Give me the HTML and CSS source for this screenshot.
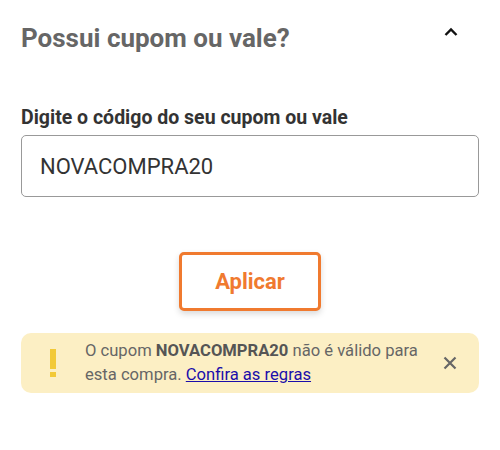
FILE: index.html
```html
<!DOCTYPE html>
<html lang="pt-BR">
<head>
<meta charset="utf-8">
<link rel="stylesheet" href="styles.css">
</head>
<body>
<div class="panel">
  <div class="header">
    <h2 class="title">Possui cupom ou vale?</h2>
    <svg class="chevron" width="14" height="10" viewBox="0 0 14 10"><path d="M1.5 8 L7 2.5 L12.5 8" fill="none" stroke="#111" stroke-width="2.4"/></svg>
  </div>
  <label class="label" for="code">Digite o código do seu cupom ou vale</label>
  <div class="input">NOVACOMPRA20</div>
  <div class="actions">
    <button class="btn">Aplicar</button>
  </div>
  <div class="alert">
    <div class="alert-icon"><span class="bar"></span><span class="dot"></span></div>
    <p class="alert-text">O cupom <b>NOVACOMPRA20</b> não é válido para esta compra. <a href="#">Confira as regras</a></p>
    <svg class="close" width="14" height="14" viewBox="0 0 14 14"><path d="M1.5 1.5 L12.5 12.5 M12.5 1.5 L1.5 12.5" stroke="#666" stroke-width="2.2"/></svg>
  </div>
</div>
</body>
</html>
```
FILE: styles.css
```css
html, body { margin: 0; padding: 0; background: #fff; }
body { font-family: Roboto, "Noto Sans", sans-serif; }
.panel { padding: 23px 21px 0 21px; display: flex; flex-direction: column; }
.header { display: flex; justify-content: space-between; align-items: flex-start; }
.title { margin: 0; font-size: 26px; line-height: 30px; font-weight: 700; color: #666; }
.chevron { margin: 4px 21px 0 0; }
.label { margin-top: 54px; font-size: 19.5px; line-height: 22px; font-weight: 700; color: #333; }
.input { margin-top: 6px; height: 60px; border: 1px solid #999; border-radius: 5px; padding: 0 18px; display: flex; align-items: center; font-size: 22px; color: #333; }
.actions { display: flex; justify-content: center; margin-top: 55px; }
.btn { width: 142px; height: 59px; border: 3px solid #f07a2f; border-radius: 5px; background: #fff; color: #f07a2f; font-family: Roboto, sans-serif; font-weight: 700; font-size: 22px; box-shadow: 0 3px 6px rgba(0,0,0,0.15); }
.alert { margin-top: 22px; background: #fcefc4; border-radius: 10px; height: 60px; display: flex; align-items: center; padding: 0 22px 0 29px; box-sizing: border-box; }
.alert-icon { width: 6px; display: flex; flex-direction: column; align-items: center; gap: 3px; margin-right: 29px; }
.bar { width: 6px; height: 20px; background: #f2c937; }
.dot { width: 6px; height: 5px; background: #f2c937; }
.alert-text { margin: 0; flex: 1; font-size: 16.6px; line-height: 24px; color: #666; }
.alert-text b { color: #555; }
.alert-text a { color: #1a0dab; }
.close { margin-left: 16px; }
```
